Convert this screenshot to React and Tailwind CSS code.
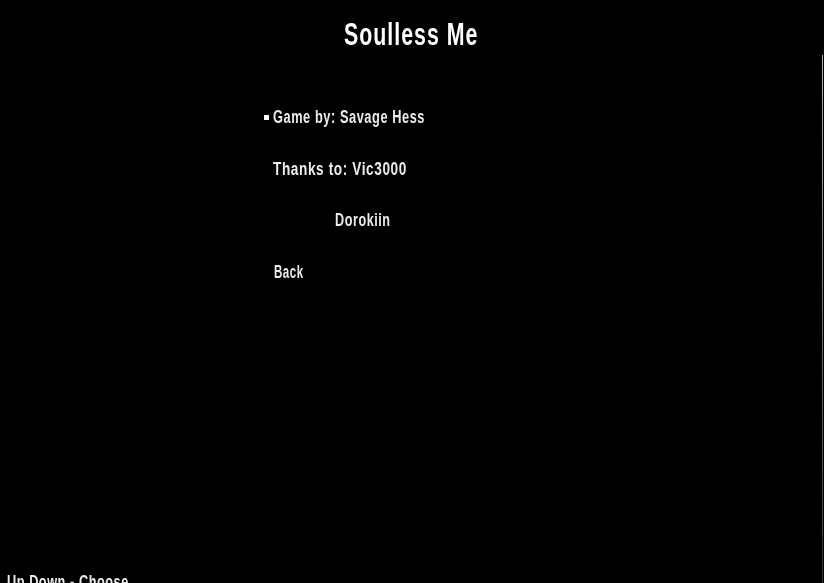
function T({ children, className }) {
  return <span className={"inline-block origin-left whitespace-nowrap " + className}>{children}</span>;
}

export default function App() {
  return (
    <div className="relative w-[824px] h-[583px] overflow-hidden bg-black text-[#ececec] font-['Liberation_Sans',sans-serif] flex flex-col">
      <h1 className="h-[71px] pt-[14px] pl-[344px] text-[32px] leading-[40px] font-bold text-white tracking-[1.5px] whitespace-nowrap blur-[0.4px]">
        <span className="inline-block origin-left scale-x-[0.667]">Soulless Me</span>
      </h1>
      <ul className="pl-[264px] flex flex-col text-[18px] leading-[22px] font-bold tracking-[0.8px] blur-[0.3px] mt-[35px] gap-[29.5px]">
        <li className="flex items-center h-[22px]">
          <span className="w-[5px] h-[5px] bg-white mr-[4px]"></span>
          <T className="scale-x-[0.71]">Game by: Savage Hess</T>
        </li>
        <li className="h-[22px] pl-[9px]"><T className="scale-x-[0.756]">Thanks to: Vic3000</T></li>
        <li className="h-[22px] pl-[71px]"><T className="scale-x-[0.7]">Dorokiin</T></li>
        <li className="h-[22px] pl-[10px]"><T className="scale-x-[0.64]">Back</T></li>
      </ul>
      <div className="mt-auto pl-[7px] h-[12px] overflow-hidden text-[18px] leading-[22px] font-bold tracking-[0.8px] blur-[0.3px]">
        <T className="scale-x-[0.705]">Up Down - Choose</T>
      </div>
      <div className="absolute right-[1px] top-[55px] bottom-0 w-px bg-gradient-to-b from-[#b0b0b0] to-[#333333]"></div>
    </div>
  );
}
